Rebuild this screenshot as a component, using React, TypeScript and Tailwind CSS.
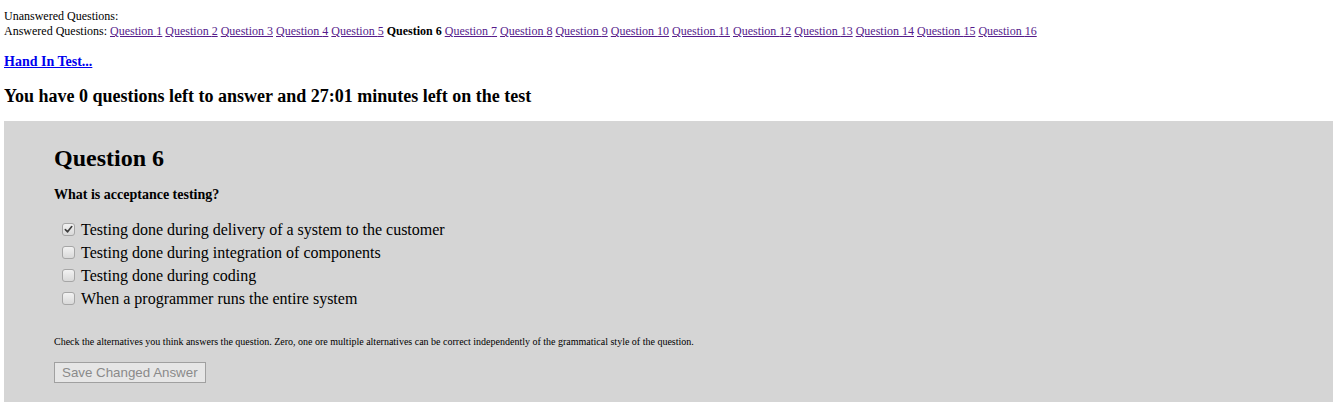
const questions = Array.from({ length: 16 }, (_, i) => i + 1)

const options = [
  { text: 'Testing done during delivery of a system to the customer', checked: true },
  { text: 'Testing done during integration of components', checked: false },
  { text: 'Testing done during coding', checked: false },
  { text: 'When a programmer runs the entire system', checked: false },
]

function Box({ checked }: { checked: boolean }) {
  return (
    <span className="flex h-[13px] w-[13px] shrink-0 items-center justify-center rounded-[3px] border border-[#a6a6a6] bg-gradient-to-b from-[#f2f2f2] to-[#d9d9d9]">
      {checked && (
        <svg viewBox="0 0 10 10" className="h-[9px] w-[9px]">
          <path d="M1.5 5.2 L4 7.6 L8.6 1.8" fill="none" stroke="#3c3c3c" strokeWidth={1.8} strokeLinecap="round" strokeLinejoin="round" />
        </svg>
      )}
    </span>
  )
}

export default function App() {
  return (
    <div className="min-h-[415px] bg-white px-[4px] pt-[9px] text-black font-['Liberation_Serif',serif]">
      <div className="text-[12px] leading-[15px]">
        <div>Unanswered Questions:</div>
        <div>
          Answered Questions:{' '}
          {questions.map((n) =>
            n === 6 ? (
              <span key={n}>
                <b>Question {n}</b>{' '}
              </span>
            ) : (
              <span key={n}>
                <a href="#" className="text-[#551a8b] underline">
                  Question {n}
                </a>{' '}
              </span>
            )
          )}
        </div>
      </div>

      <a href="#" className="mt-[14px] block w-fit text-[14px] font-bold leading-[18px] text-[#0000ee] underline">
        Hand In Test...
      </a>

      <h3 className="mt-[14px] text-[18px] font-bold leading-[22px]">
        You have 0 questions left to answer and 27:01 minutes left on the test
      </h3>

      <div className="mt-[14px] mr-[-1px] bg-[#d5d5d5] pl-[50px] pt-[23px] pb-[18px]">
        <h2 className="text-[24px] font-bold leading-[28px]">Question 6</h2>
        <p className="mt-[14px] text-[14px] font-bold leading-[17px]">What is acceptance testing?</p>

        <ul className="mt-[15px] pl-[8px]">
          {options.map((o) => (
            <li key={o.text} className="flex h-[23px] items-center text-[16px]">
              <Box checked={o.checked} />
              <span className="ml-[6px]">{o.text}</span>
            </li>
          ))}
        </ul>

        <p className="mt-[26px] text-[10px] leading-[12px]">
          Check the alternatives you think answers the question. Zero, one ore multiple alternatives can be correct
          independently of the grammatical style of the question.
        </p>

        <button
          disabled
          className="mt-[14px] h-[21px] border border-[#a0a0a0] bg-[#e6e6e6] px-[7px] text-[13.33px] leading-[17px] text-[#8a8a8a] font-['Liberation_Sans',sans-serif]"
        >
          Save Changed Answer
        </button>
      </div>
    </div>
  )
}
